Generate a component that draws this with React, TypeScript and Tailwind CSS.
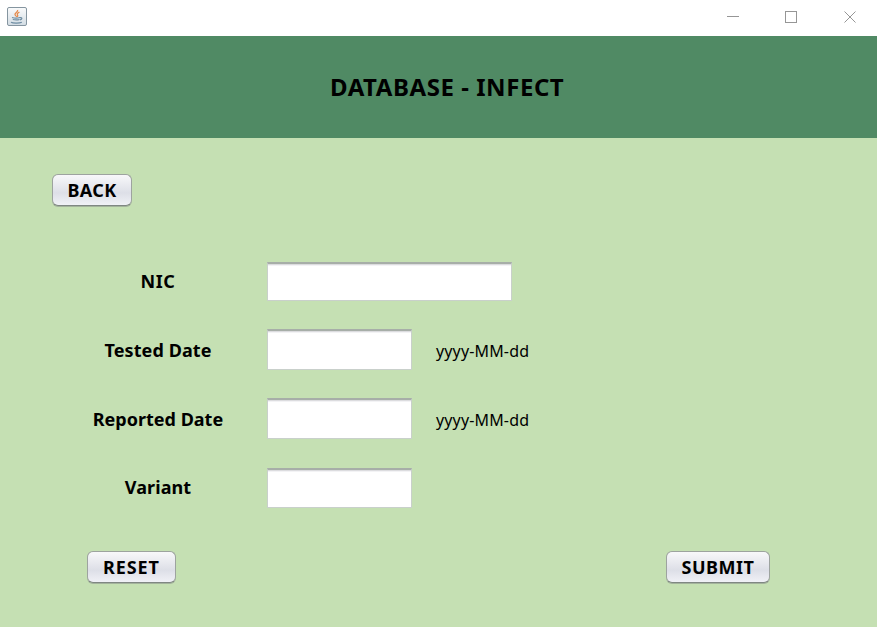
import React from 'react';

function SwingButton({ label, className, textClass }: { label: string; className: string; textClass: string }) {
  return (
    <button
      type="button"
      className={`flex items-center justify-center rounded-[6px] border-[1.5px] border-[#9da39f] border-b-[#7f8782] bg-linear-to-b from-[#f8f8fa] via-[#dddfe7] via-60% to-[#f0f1f6] text-[18px] leading-[20px] font-bold shadow-[0_1px_0_#a3b39c] ${className}`}
    >
      <span className={`whitespace-nowrap ${textClass}`}>{label}</span>
    </button>
  );
}

function Field({ label, textClass, inputClass, hint }: { label: string; textClass: string; inputClass: string; hint?: string }) {
  return (
    <div className="flex h-[41px] items-start">
      <label className={`flex h-[40px] w-[267px] items-center pl-[50px] text-[18px] leading-[20px] font-bold ${textClass}`}>
        <span className="w-[216px] text-center whitespace-nowrap">{label}</span>
      </label>
      <input
        type="text"
        className={`border border-t-2 border-[#c9d0cb] border-t-[#a7aea8] bg-white shadow-[inset_0_1px_0_#dcdcdf,inset_0_2px_0_#f3f3f5] outline-none ${inputClass}`}
      />
      {hint && <span className="ml-[24px] pt-[12px] text-[16px] leading-[20px] tracking-[0.15px] whitespace-nowrap">{hint}</span>}
    </div>
  );
}

export default function App() {
  return (
    <div className="flex h-[627px] w-[877px] flex-col overflow-hidden bg-[#c5e0b3] font-['Noto_Sans',sans-serif] text-black">
      <div className="flex h-[36px] shrink-0 items-start justify-between bg-white">
        <svg width="20" height="20" viewBox="0 0 20 20" className="mt-[7px] ml-[7px]" fill="none">
          <defs>
            <linearGradient id="tile" x1="0" y1="0" x2="0" y2="1">
              <stop offset="0" stopColor="#fafbfc" />
              <stop offset="1" stopColor="#d2dce3" />
            </linearGradient>
          </defs>
          <rect x="0.5" y="0.5" width="19" height="18" rx="1.5" fill="url(#tile)" stroke="#8595a0" />
          <path d="M10.6 3C11.4 5 7.4 5.7 8 7.6C8.4 8.8 9.7 9.2 9.5 10M12.4 5.2C10.8 6 9.8 6.8 10.5 7.8C11.1 8.6 10.7 9.3 10.3 9.8" stroke="#e58a4b" strokeWidth="1.3" />
          <path d="M5 10.5C7 11.1 11 11.1 13 10.5M5.8 12.5C8 13.1 10.5 13.1 12.6 12.5M13 10.7C15.6 10 15.3 12.5 13 12.9M4 15.3C6 16.4 12.5 16.4 14.8 15.2" stroke="#6f8da3" strokeWidth="1.2" />
        </svg>
        <svg width="167" height="36" viewBox="0 0 167 36" fill="none" stroke="#969696" strokeWidth="1">
          <path d="M17 16.5H29" />
          <rect x="75.5" y="11.5" width="11" height="11" />
          <path d="M134.5 11.5L145.5 22.5M145.5 11.5L134.5 22.5" />
        </svg>
      </div>

      <header className="flex h-[102px] shrink-0 items-center bg-[#508a64] pl-[330px]">
        <h1 className="text-[24px] leading-[30px] font-bold tracking-[0.55px] whitespace-nowrap">DATABASE - INFECT</h1>
      </header>

      <main className="flex flex-1 flex-col">
        <div className="pt-[36px] pl-[52px]">
          <SwingButton label="BACK" className="h-[32px] w-[80px]" textClass="tracking-[0.4px]" />
        </div>
        <div className="mt-[56px] flex flex-col">
          <Field label="NIC" textClass="pb-[2px] tracking-[0.6px]" inputClass="h-[39px] w-[245px]" />
          <div className="h-[26px]" />
          <Field label="Tested Date" textClass="pt-[2px] tracking-[0.1px]" inputClass="h-[41px] w-[145px]" hint="yyyy-MM-dd" />
          <div className="h-[28px]" />
          <Field label="Reported Date" textClass="pt-[2px]" inputClass="h-[41px] w-[145px]" hint="yyyy-MM-dd" />
          <div className="h-[29px]" />
          <Field label="Variant" textClass="pb-[2px] tracking-[0.1px]" inputClass="h-[40px] w-[145px]" />
        </div>
        <div className="mt-[42px] flex justify-between pr-[107px] pl-[87px]">
          <SwingButton label="RESET" className="h-[32px] w-[89px]" textClass="tracking-[0.9px]" />
          <SwingButton label="SUBMIT" className="h-[32px] w-[104px]" textClass="tracking-[0.5px]" />
        </div>
      </main>
    </div>
  );
}
